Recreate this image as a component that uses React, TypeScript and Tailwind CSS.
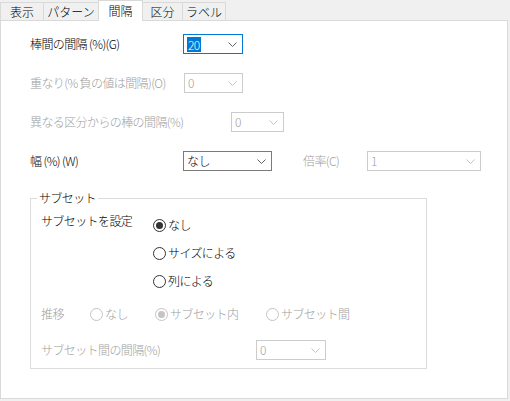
import { ReactNode } from 'react'

type ComboState = 'focus' | 'normal' | 'disabled'

const Chevron = ({ muted }: { muted: boolean }) => (
  <svg width="9" height="5" viewBox="0 0 9 5" className="shrink-0">
    <polyline
      points="0.5,0.5 4.5,4.5 8.5,0.5"
      fill="none"
      stroke={muted ? '#c4c4c4' : '#606060'}
      strokeWidth="1"
    />
  </svg>
)

const Combo = ({ value, width, state }: { value: string; width: string; state: ComboState }) => {
  const border =
    state === 'focus' ? 'border-[#0078d7]' : state === 'normal' ? 'border-[#7a7a7a]' : 'border-[#cccccc]'
  return (
    <div className={`${width} ${border} flex h-[20px] items-center justify-between border bg-white pr-[5px] pl-[3px]`}>
      {state === 'focus' ? (
        <span className="bg-[#0078d7] px-px leading-[15px] text-white">{value}</span>
      ) : (
        <span className={state === 'disabled' ? 'text-[#a0a0a0]' : 'text-black'}>{value}</span>
      )}
      <Chevron muted={state === 'disabled'} />
    </div>
  )
}

const Radio = ({ label, checked, disabled }: { label: string; checked?: boolean; disabled?: boolean }) => (
  <div className={`flex items-center gap-[2px] ${disabled ? 'text-[#a0a0a0]' : 'text-black'}`}>
    <span
      className={`flex h-[13px] w-[13px] items-center justify-center rounded-full border bg-white ${
        disabled ? 'border-[#c4c4c4]' : 'border-[#333333]'
      }`}
    >
      {checked && <span className={`h-[7px] w-[7px] rounded-full ${disabled ? 'bg-[#c4c4c4]' : 'bg-[#333333]'}`} />}
    </span>
    <span>{label}</span>
  </div>
)

const Row = ({ children, className = '' }: { children: ReactNode; className?: string }) => (
  <div className={`flex h-[20px] items-center ${className}`}>{children}</div>
)

const tabs = [
  { label: '表示', w: 'w-[44px]' },
  { label: 'パターン', w: 'w-[56px]' },
  { label: '間隔', w: 'w-[45px]', active: true },
  { label: '区分', w: 'w-[41px]' },
  { label: 'ラベル', w: 'w-[44px]' },
]

export default function App() {
  return (
    <div className="h-[401px] w-[510px] overflow-hidden bg-[#f0f0f0] font-['Meiryo_UI','Noto_Sans_CJK_JP',sans-serif] text-[12px] leading-[16px] font-light tracking-[-0.6px] text-black">
      {/* tab strip */}
      <div className="relative z-10 flex h-[20px] items-end">
        {tabs.map((t, i) =>
          t.active ? (
            <div
              key={t.label}
              className={`${t.w} -mb-px -ml-px flex h-[21px] items-start justify-center border-x border-t border-[#d9d9d9] bg-white pt-[2px] tracking-normal`}
            >
              {t.label}
            </div>
          ) : (
            <div
              key={t.label}
              className={`${t.w} ${i > 0 ? '-ml-px' : ''} flex h-[18px] items-center justify-center border-x border-t border-[#d9d9d9] bg-[#f0f0f0] tracking-normal`}
            >
              {t.label}
            </div>
          ),
        )}
      </div>

      {/* page body */}
      <div className="flex h-[379px] w-[508px] flex-col border border-[#d9d9d9] bg-white pt-[13px] pl-[29px]">
        <Row>
          <span className="w-[153px]">棒間の間隔 (%)(G)</span>
          <Combo value="20" width="w-[60px]" state="focus" />
        </Row>
        <Row className="mt-[19px] text-[#a0a0a0]">
          <span className="w-[154px]">重なり(% 負の値は間隔)(O)</span>
          <Combo value="0" width="w-[59px]" state="disabled" />
        </Row>
        <Row className="mt-[19px] text-[#a0a0a0]">
          <span className="w-[201px]">異なる区分からの棒の間隔(%)</span>
          <Combo value="0" width="w-[53px]" state="disabled" />
        </Row>
        <Row className="mt-[19px]">
          <span className="w-[153px]">幅 (%) (W)</span>
          <Combo value="なし" width="w-[89px]" state="normal" />
          <span className="ml-[31px] w-[64px] text-[#a0a0a0]">倍率(C)</span>
          <Combo value="1" width="w-[114px]" state="disabled" />
        </Row>

        <fieldset className="mt-[19px] w-[397px] border border-[#dcdcdc]">
          <legend className="ml-[6px] px-[2px]">サブセット</legend>
          <div className="flex flex-col pr-[10px] pb-[8px] pl-[10px]">
            <div className="flex">
              <span className="mt-[7px] w-[112px]">サブセットを設定</span>
              <div className="mt-[9px] flex flex-col gap-[8px]">
                <Row>
                  <Radio label="なし" checked />
                </Row>
                <Row>
                  <Radio label="サイズによる" />
                </Row>
                <Row>
                  <Radio label="列による" />
                </Row>
              </div>
            </div>
            <Row className="mt-[13px] text-[#a0a0a0]">
              <span className="w-[49px]">推移</span>
              <div className="w-[65px]">
                <Radio label="なし" disabled />
              </div>
              <div className="w-[111px]">
                <Radio label="サブセット内" checked disabled />
              </div>
              <Radio label="サブセット間" disabled />
            </Row>
            <Row className="mt-[16px] text-[#a0a0a0]">
              <span className="w-[215px]">サブセット間の間隔(%)</span>
              <Combo value="0" width="w-[70px]" state="disabled" />
            </Row>
          </div>
        </fieldset>
      </div>
    </div>
  )
}
